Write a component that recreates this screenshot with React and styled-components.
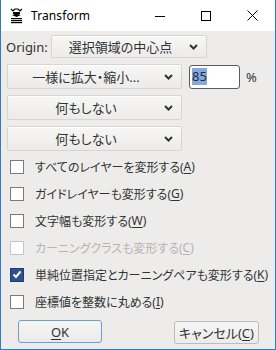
import React from 'react'
import styled, { createGlobalStyle } from 'styled-components'

const GlobalStyle = createGlobalStyle`
  html, body {
    margin: 0;
    padding: 0;
    width: 276px;
    height: 350px;
    overflow: hidden;
    background: #ffffff;
  }
  * {
    box-sizing: border-box;
  }
`

const FONT = `"Noto Sans", "Noto Sans CJK JP", sans-serif`

const Window = styled.div`
  width: 276px;
  height: 350px;
  display: flex;
  flex-direction: column;
  border: 1px solid #2b7bd2;
  border-top: none;
  font-family: ${FONT};
  font-feature-settings: 'palt';
  color: #2e3436;
`

const TitleBar = styled.div`
  height: 31px;
  background: #ffffff;
  display: flex;
  align-items: center;
  flex-shrink: 0;
`

const AppIcon = styled.svg`
  margin-left: 9px;
  width: 13px;
  height: 16px;
`

const Title = styled.span`
  margin-left: 8px;
  font-size: 12px;
  color: #000000;
  flex: 1;
  letter-spacing: 0.1px;
`

const WinButton = styled.div`
  width: 46px;
  height: 31px;
  display: flex;
  align-items: center;
  justify-content: center;
`

const Body = styled.div`
  flex: 1;
  background: #edecea;
  display: flex;
  flex-direction: column;
  padding-top: 4px;
`

const Row = styled.div`
  display: flex;
  align-items: center;
  margin-top: ${p => p.$top || 0}px;
  padding-left: ${p => p.$left || 6}px;
`

const Label = styled.span`
  font-size: 13px;
  width: 45px;
`

const Combo = styled.div`
  width: ${p => p.$width}px;
  height: ${p => p.$height || 25}px;
  display: flex;
  align-items: center;
  border: 1px solid #d6d5d3;
  border-radius: 2px;
  background: linear-gradient(#f7f7f6, #ecebea);
  box-shadow: inset 0 1px 0 #ffffff;
  font-size: 13px;
  padding-right: 8px;
`

const ComboText = styled.span`
  flex: 1;
  text-align: center;
  white-space: nowrap;
`

const Chevron = () => (
  <svg width='9' height='6' viewBox='0 0 9 6'>
    <path d='M1 1 L4.5 4.5 L8 1' fill='none' stroke='#2e3436' strokeWidth='2' />
  </svg>
)

const NumberBox = styled.div`
  width: 51px;
  height: 24px;
  margin-left: 7px;
  background: #ffffff;
  border: 1px solid #5c5c5c;
  border-radius: 3px;
  display: flex;
  align-items: center;
  padding-left: 2px;
  font-size: 13px;
`

const Selected = styled.span`
  background: #86a9d9;
  color: #1e2d45;
  line-height: 17px;
`

const Unit = styled.span`
  margin-left: 6px;
  font-size: 13px;
`

const Checks = styled.div`
  display: flex;
  flex-direction: column;
  margin-top: 2px;
`

const CheckRow = styled.div`
  height: 27px;
  display: flex;
  align-items: center;
  padding-left: 9px;
  font-size: 12px;
  color: ${p => (p.$disabled ? '#b3b5b5' : '#2e3436')};
  white-space: nowrap;
`

const Box = styled.span`
  width: 14px;
  height: 14px;
  flex-shrink: 0;
  border: 1px solid ${p => (p.$checked ? '#1f3e6e' : p.$disabled ? '#c4c4c4' : '#7b7b7b')};
  background: ${p => (p.$checked ? '#2c5190' : '#ffffff')};
  display: flex;
  align-items: center;
  justify-content: center;
  margin-right: 11px;
`

const Key = styled.span`
  text-decoration: underline;
  text-underline-offset: 2px;
`

const Footer = styled.div`
  display: flex;
  justify-content: space-between;
  padding: 0 16px 0 17px;
  margin-top: 5px;
`

const Button = styled.div`
  width: ${p => p.$width}px;
  height: 23px;
  margin-top: ${p => p.$top || 0}px;
  display: flex;
  align-items: center;
  justify-content: center;
  border: 1px solid ${p => (p.$focused ? '#6c9fd9' : '#bdbcba')};
  border-radius: 3px;
  background: linear-gradient(#f6f6f5, #ecebea);
  font-size: 13px;
  color: #2e3436;
`

const Check = ({ label, k, checked, disabled }) => (
  <CheckRow $disabled={disabled}>
    <Box $checked={checked} $disabled={disabled}>
      {checked && (
        <svg width='10' height='9' viewBox='0 0 10 9'>
          <path d='M1.5 4.5 L4 7 L8.5 1.5' fill='none' stroke='#ffffff' strokeWidth='2' />
        </svg>
      )}
    </Box>
    {label}(<Key>{k}</Key>)
  </CheckRow>
)

const App = () => (
  <>
    <GlobalStyle />
    <Window>
      <TitleBar>
        <AppIcon viewBox='0 0 13 16'>
          <path d='M1 1 L3 3 L5 1 L8 1 L10 3 L12 1' fill='none' stroke='#000' strokeWidth='1.2' />
          <rect x='3' y='4' width='7' height='2' fill='#000' />
          <path d='M2 7 L6.5 5.5 L11 7 L6.5 9 Z' fill='#000' />
          <rect x='1' y='10' width='11' height='1.2' fill='#000' />
          <rect x='1' y='12' width='11' height='1.2' fill='#000' />
          <rect x='1' y='14' width='11' height='1.2' fill='#000' />
        </AppIcon>
        <Title>Transform</Title>
        <WinButton>
          <svg width='10' height='10' viewBox='0 0 10 10'>
            <path d='M0 5.5 H10' stroke='#000' strokeWidth='1' />
          </svg>
        </WinButton>
        <WinButton>
          <svg width='10' height='10' viewBox='0 0 10 10'>
            <rect x='0.5' y='0.5' width='9' height='9' fill='none' stroke='#000' strokeWidth='1' />
          </svg>
        </WinButton>
        <WinButton>
          <svg width='11' height='11' viewBox='0 0 11 11'>
            <path d='M0.5 0.5 L10.5 10.5 M10.5 0.5 L0.5 10.5' stroke='#000' strokeWidth='1' />
          </svg>
        </WinButton>
      </TitleBar>
      <Body>
        <Row $left={5}>
          <Label>Origin:</Label>
          <Combo $width={156} $height={23}>
            <ComboText>選択領域の中心点</ComboText>
            <Chevron />
          </Combo>
        </Row>
        <Row $top={6}>
          <Combo $width={175}>
            <ComboText>一様に拡大・縮小...</ComboText>
            <Chevron />
          </Combo>
          <NumberBox>
            <Selected>85</Selected>
          </NumberBox>
          <Unit>%</Unit>
        </Row>
        <Row $top={6}>
          <Combo $width={175}>
            <ComboText>何もしない</ComboText>
            <Chevron />
          </Combo>
        </Row>
        <Row $top={6}>
          <Combo $width={175}>
            <ComboText>何もしない</ComboText>
            <Chevron />
          </Combo>
        </Row>
        <Checks>
          <Check label='すべてのレイヤーを変形する' k='A' />
          <Check label='ガイドレイヤーも変形する' k='G' />
          <Check label='文字幅も変形する' k='W' />
          <Check label='カーニングクラスも変形する' k='C' disabled />
          <Check label='単純位置指定とカーニングペアも変形する' k='K' checked />
          <Check label='座標値を整数に丸める' k='I' />
        </Checks>
        <Footer>
          <Button $width={84} $focused>
            <Key>O</Key>K
          </Button>
          <Button $width={85} $top={1}>
            キャンセル(<Key>C</Key>)
          </Button>
        </Footer>
      </Body>
    </Window>
  </>
)

export default App
